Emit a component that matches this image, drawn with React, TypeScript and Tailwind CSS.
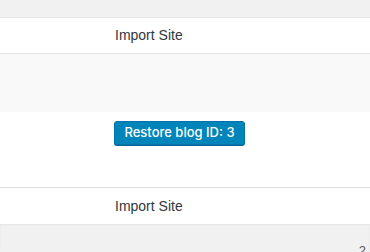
const font = {fontFamily: '"Liberation Sans", Arial, sans-serif'};
const buttonFont = {fontFamily: 'Inter, "Liberation Sans", sans-serif'};

export default function App() {
  return (
    <div className="h-[252px] w-[370px] overflow-hidden bg-[#f1f1f1] text-[#32373c]" style={font}>
      <div className="h-[17px] bg-[#f1f1f1]" />
      <div className="flex h-[37px] items-center border-y border-[#e5e5e5] bg-white pl-[115px] text-[14px]">
        Import Site
      </div>
      <div className="h-[58px] bg-[#f9f9f9]" />
      <div className="h-[76px] border-b border-[#e1e1e1] bg-white pl-[114px] pt-[8px]">
        <button
          type="button"
          style={buttonFont}
          className="h-[24px] w-[131px] rounded-[3px] border border-[#0073aa] bg-[#0085ba] text-[13px] font-medium leading-none text-white shadow-[0_1px_0_#006799]"
        >
          Restore blog ID: 3
        </button>
      </div>
      <div className="flex h-[36px] items-center bg-white pl-[115px] text-[14px]">Import Site</div>
      <div className="relative h-[27px] bg-[#f1f1f1] shadow-[inset_0_1px_2px_rgba(0,0,0,0.05)]">
        <span className="absolute right-[4px] top-[17px] text-[13px] text-[#555]">2</span>
      </div>
    </div>
  );
}
